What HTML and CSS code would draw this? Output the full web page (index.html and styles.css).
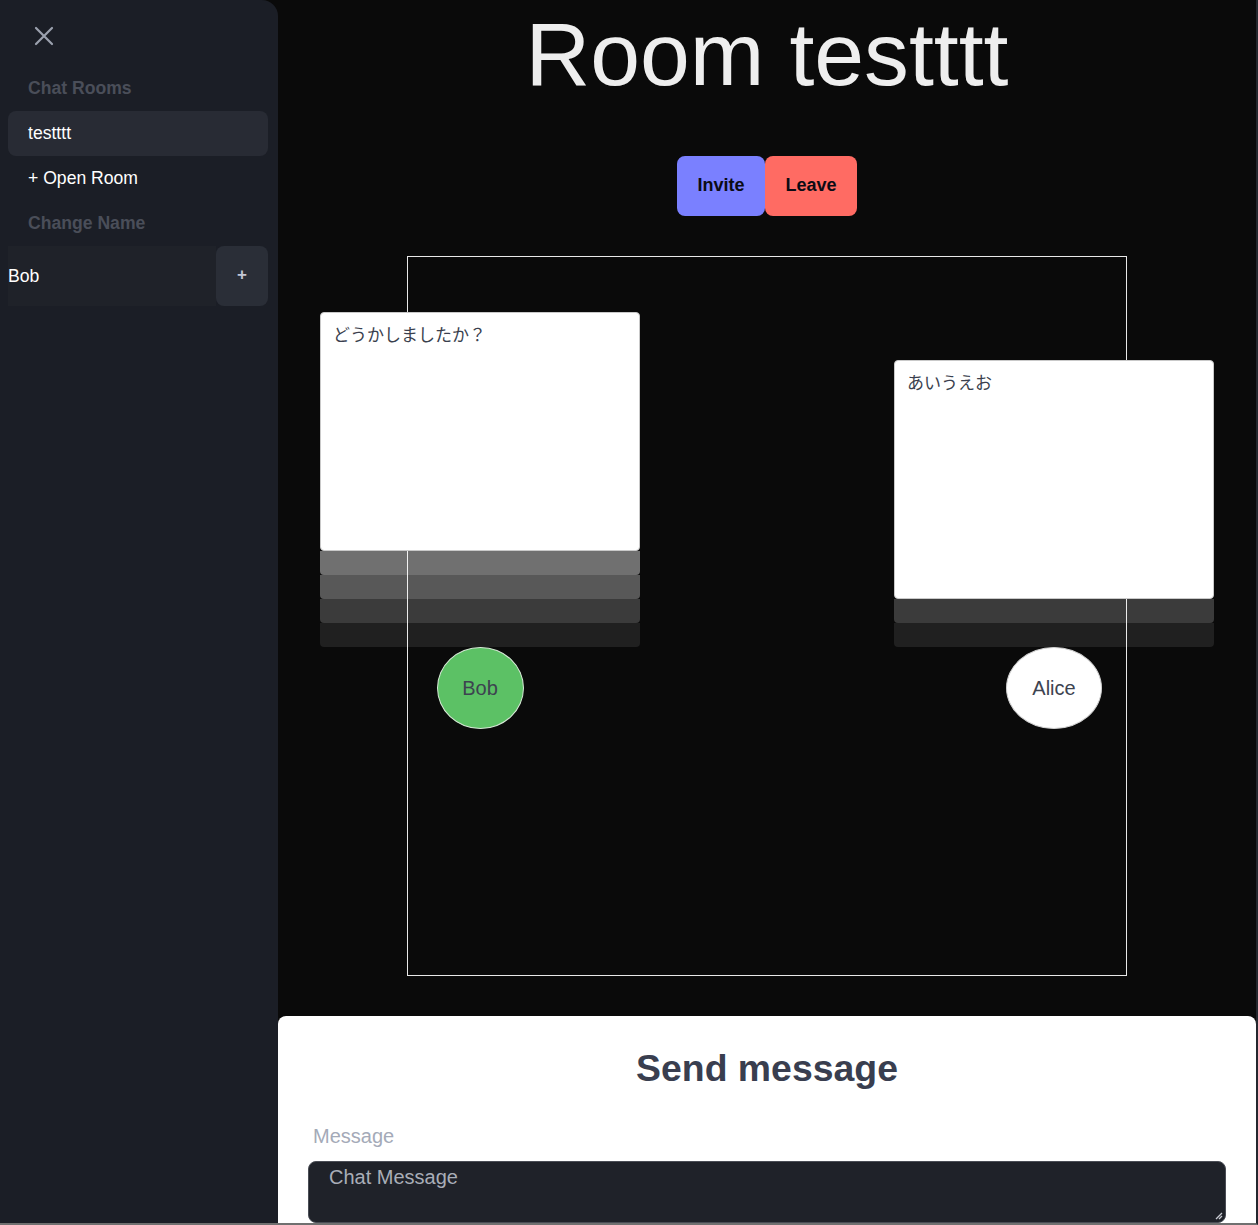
FILE: index.html
```html
<!DOCTYPE html>
<html lang="ja">
<head>
<meta charset="utf-8">
<title>Room testttt</title>
<link rel="stylesheet" href="styles.css">
</head>
<body>
<div class="app">
  <aside class="sidebar">
    <div class="close-row">
      <button class="close-btn" aria-label="Close">
        <svg width="20" height="20" viewBox="0 0 20 20"><path d="M2 2 L18 18 M18 2 L2 18" stroke="#9ba1ae" stroke-width="2.2" stroke-linecap="round" fill="none"/></svg>
      </button>
    </div>
    <div class="side-heading">Chat Rooms</div>
    <div class="side-item active">testttt</div>
    <div class="side-item">+ Open Room</div>
    <div class="side-heading">Change Name</div>
    <div class="name-row">
      <div class="name-input">Bob</div>
      <button class="name-btn">+</button>
    </div>
  </aside>
  <main class="main">
    <h1 class="title">Room testttt</h1>
    <div class="actions">
      <button class="btn btn-invite">Invite</button>
      <button class="btn btn-leave">Leave</button>
    </div>
    <div class="stage">
      <div class="user user-bob">
        <div class="card"><span>どうかしましたか？</span></div>
        <div class="layer l1"></div>
        <div class="layer l2"></div>
        <div class="layer l3"></div>
        <div class="layer l4"></div>
        <div class="avatar avatar-bob">Bob</div>
      </div>
      <div class="user user-alice">
        <div class="card"><span>あいうえお</span></div>
        <div class="layer l3"></div>
        <div class="layer l4"></div>
        <div class="avatar avatar-alice">Alice</div>
      </div>
    </div>
    <section class="composer">
      <h2 class="composer-title">Send message</h2>
      <label class="composer-label">Message</label>
      <div class="textarea"><span class="placeholder">Chat Message</span>
        <svg class="grip" width="10" height="10" viewBox="0 0 10 10"><path d="M9 3 L3 9 M9 6 L6 9" stroke="#c9ccd3" stroke-width="1.3"/></svg>
      </div>
    </section>
  </main>
</div>
</body>
</html>
```

FILE: styles.css
```css
* { box-sizing: border-box; }
html, body { margin: 0; padding: 0; }
body {
  background: #0a0a0a;
  font-family: "Liberation Sans", Arial, sans-serif;
  color: #fff;
  width: 1258px;
  height: 1225px;
  overflow: hidden;
}
.app {
  display: flex;
  height: 1225px;
  border-right: 2px solid #24272e;
  border-bottom: 2px solid #707070;
  overflow: hidden;
}
.sidebar {
  width: 278px;
  flex: none;
  background: #1b1e26;
  border-top-right-radius: 16px;
  padding: 8px 10px 0 8px;
  display: flex;
  flex-direction: column;
}
.close-row {
  height: 58px;
  display: flex;
  align-items: center;
  padding-left: 26px;
}
.close-btn {
  background: none;
  border: 0;
  padding: 0;
  width: 20px;
  height: 20px;
  display: block;
  margin-top: -2px;
}
.close-btn svg { display: block; }
.side-heading {
  height: 45px;
  display: flex;
  align-items: center;
  padding-left: 20px;
  font-size: 17.6px;
  font-weight: bold;
  color: #4a4e59;
}
.side-item {
  height: 45px;
  display: flex;
  align-items: center;
  padding-left: 20px;
  font-size: 17.6px;
  color: #fff;
  border-radius: 8px;
}
.side-item.active { background: #282b34; }
.name-row {
  display: flex;
  height: 60px;
}
.name-input {
  flex: 1;
  background: #1f2229;
  display: flex;
  align-items: center;
  font-size: 17.6px;
  color: #fff;
}
.name-btn {
  width: 52px;
  border: 0;
  background: #2a2e37;
  border-radius: 8px;
  color: #c3c6d4;
  font-family: "Liberation Sans", Arial, sans-serif;
  font-weight: bold;
  font-size: 17px;
  padding: 0 0 2px 0;
}
.main {
  flex: 1;
  display: flex;
  flex-direction: column;
  align-items: center;
  min-width: 0;
}
.title {
  margin: 0;
  padding-top: 2px;
  font-size: 89.6px;
  font-weight: normal;
  line-height: 104px;
  color: #eeeeee;
}
.actions {
  margin-top: 50px;
  display: flex;
}
.btn {
  height: 60px;
  border: 0;
  border-radius: 8px;
  padding: 0 20px 2px;
  font-family: "Liberation Sans", Arial, sans-serif;
  font-weight: bold;
  font-size: 18px;
  color: #0b0b14;
}
.btn-invite { background: #7a80ff; width: 88px; }
.btn-leave { background: #ff6b63; width: 92px; }
.stage {
  margin-top: 40px;
  width: 720px;
  height: 720px;
  border: 1px solid #e8e8e8;
  position: relative;
  flex: none;
}
.user {
  position: absolute;
  width: 320px;
  display: flex;
  flex-direction: column;
  align-items: center;
}
.user-bob { left: -88px; top: 55px; }
.user-alice { left: 486px; top: 103px; }
.card {
  width: 320px;
  height: 239px;
  background: #fff;
  border: 1px solid #c9c9c9;
  border-radius: 4px;
  padding: 8px 12px;
  font-family: "Noto Sans CJK JP", "Liberation Sans", sans-serif;
  font-size: 17px;
  color: #3a3f4e;
  position: relative;
  z-index: 2;
}
.layer {
  width: 320px;
  height: 24px;
  border-radius: 0 0 4px 4px;
  position: relative;
  z-index: 1;
}
.l1 { background: rgba(255,255,255,0.42); }
.l2 { background: rgba(255,255,255,0.32); }
.l3 { background: rgba(255,255,255,0.2); }
.l4 { background: rgba(255,255,255,0.09); }
.avatar {
  height: 82px;
  border-radius: 50%;
  display: flex;
  align-items: center;
  justify-content: center;
  font-size: 20px;
  color: #3d4350;
  position: relative;
  z-index: 2;
}
.avatar-bob {
  width: 87px;
  background: #5cc165;
  border: 1px solid #d6e8d6;
}
.avatar-alice {
  width: 96px;
  background: #fff;
  border: 1px solid #d0d0d0;
}
.composer {
  margin-top: 40px;
  width: 100%;
  flex: 1;
  background: #fff;
  border-radius: 8px 8px 0 0;
  padding: 29px 30px 0 30px;
}
.composer-title {
  margin: 0;
  text-align: center;
  font-size: 37.4px;
  line-height: 46px;
  font-weight: bold;
  color: #393e4f;
}
.composer-label {
  display: block;
  margin-top: 33px;
  padding-left: 5px;
  font-size: 20px;
  line-height: 24px;
  color: #a4aab8;
}
.textarea {
  margin-top: 13px;
  height: 62px;
  background: #1f2229;
  border: 1px solid #4a4d55;
  border-radius: 8px;
  padding: 3px 20px;
  position: relative;
}
.placeholder {
  font-size: 20px;
  line-height: 24px;
  color: #a9aeb8;
}
.grip {
  position: absolute;
  right: 2px;
  bottom: 2px;
}
```
